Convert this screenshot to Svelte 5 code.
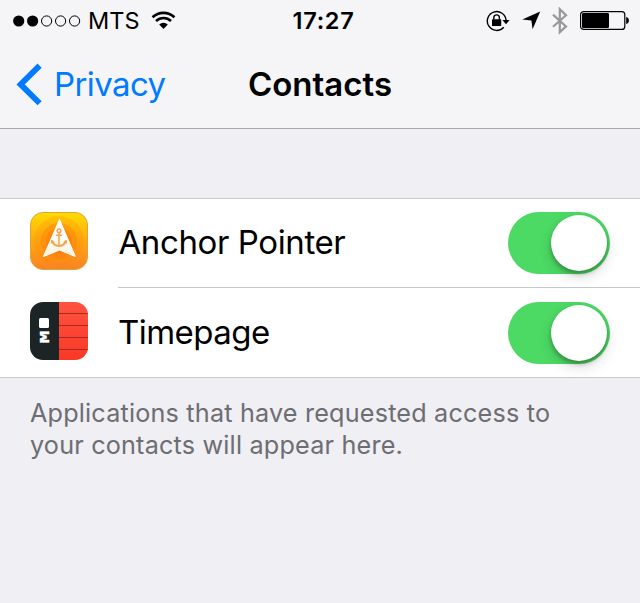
<script>
  let apps = $state([
    { id: 'anchor', name: 'Anchor Pointer', on: true },
    { id: 'timepage', name: 'Timepage', on: true }
  ]);
</script>

<div class="screen">
  <header>
    <div class="status">
      <div class="left">
        <svg class="signal" width="68" height="12" viewBox="0 0 68 12">
          <circle cx="5.7" cy="6" r="5.6" />
          <circle cx="19.6" cy="6" r="5.6" />
          {#each [33.6, 47.6, 61.6] as x}
            <circle cx={x} cy="6" r="5.1" fill="none" stroke="#000" stroke-width="1" />
          {/each}
        </svg>
        <span class="carrier">MTS</span>
        <svg class="wifi" width="25" height="19.500" viewBox="0 0 26 20">
          <path d="M1.6 6.4a16.5 16.5 0 0 1 22.8 0M5.2 10.3a11.3 11.3 0 0 1 15.6 0" fill="none" stroke="#000" stroke-width="2.7" />
          <path d="M8.5 13.9a6.6 6.6 0 0 1 9 0L13 18.6z" />
        </svg>
      </div>
      <span class="time">17:27</span>
      <div class="right">
        <svg class="lock" width="24" height="22" viewBox="0 0 24 22">
          <path d="M17.8 17.2A9.4 9.4 0 1 1 20.1 10.5" fill="none" stroke="#000" stroke-width="1.4" />
          <path d="M16.4 10h7.2L20 14.2z" />
          <rect x="6" y="9.2" width="9.2" height="6.8" rx=".6" />
          <path d="M7.8 9.5V7.7a2.8 2.8 0 0 1 5.6 0v1.8" fill="none" stroke="#000" stroke-width="1.4" />
        </svg>
        <svg class="arrow" width="19" height="19" viewBox="0 0 19 19"><path d="M18.2.5 10.6 18.3 9.400 9.600.3 8.600z" /></svg>
        <svg class="bt" width="16" height="28" viewBox="0 0 16 28">
          <path d="M1 7.6 14 19.4 7.8 25.2V2.2L14 8.2 1 19.8" fill="none" stroke="#98989a" stroke-width="2.200" />
        </svg>
        <svg class="battery" width="49" height="19" viewBox="0 0 49 19">
          <rect x=".6" y=".6" width="44.2" height="17.8" rx="3" fill="none" stroke="#000" stroke-width="1.2" />
          <rect x="2" y="2" width="27" height="15" rx="1.2" />
          <path d="M46.2 6c3.6.6 3.6 6.400 0 7z" />
        </svg>
      </div>
    </div>
    <nav>
      <button class="back">
        <svg width="26" height="43" viewBox="0 0 26 43"><path d="M23.600 2.600 4.600 21.400 23.600 40.200" fill="none" stroke="#007aff" stroke-width="5.800" /></svg>
        <span>Privacy</span>
      </button>
      <h1>Contacts</h1>
    </nav>
  </header>

  <section class="list">
    {#each apps as app (app.id)}
      <div class="row">
        {#if app.id === 'anchor'}
          <svg class="icon" width="58" height="58" viewBox="0 0 58 58">
            <defs>
              <linearGradient id="sun" x1="0" y1="0" x2="0" y2="1">
                <stop offset="0" stop-color="#ffdc00" /><stop offset=".5" stop-color="#ffa811" /><stop offset="1" stop-color="#fa8224" />
              </linearGradient>
              <linearGradient id="paper" x1="0" y1="0" x2="0" y2="1">
                <stop offset=".4" stop-color="#fff" /><stop offset="1" stop-color="#fff2df" />
              </linearGradient>
            </defs>
            <rect x=".5" y=".5" width="57" height="57" rx="12.500" fill="url(#sun)" stroke="#dda43c" />
            <circle cx="29" cy="29" r="25" fill="#ff8208" opacity=".22" />
            <circle cx="29" cy="29" r="18" fill="#ff7808" opacity=".38" />
            <circle cx="29" cy="29" r="13" fill="#f56e0c" opacity=".35" />
            <path d="M29.500 7.500 45.300 44.500 29.500 38 13.500 44.500z" fill="url(#paper)" stroke="#fff" stroke-linejoin="round" />
            <g fill="none" stroke="#f5a44a" stroke-width="1.500">
              <circle cx="29" cy="18.700" r="1.800" />
              <path d="M29 20.500V34M25.700 23.200h6.600" />
              <path d="M22 28.500c1 3.800 3.400 5.400 7 5.400s6-1.600 7-5.400" stroke-width="2" />
            </g>
            <path d="m21 27.800 4 2.500-3.700 1.500zM37 27.800l-4 2.500 3.700 1.500z" fill="#f5a44a" />
          </svg>
        {:else}
          <svg class="icon" width="58" height="58" viewBox="0 0 58 58">
            <defs>
              <clipPath id="tile"><rect width="58" height="58" rx="13" /></clipPath>
              <linearGradient id="red" x1="0" y1="0" x2="0" y2="1">
                <stop offset="0" stop-color="#ff533e" /><stop offset="1" stop-color="#f93827" />
              </linearGradient>
            </defs>
            <g clip-path="url(#tile)">
              <rect width="29" height="58" fill="#1d2426" />
              <rect x="29" width="29" height="58" fill="url(#red)" />
              <path d="M29 11.500h29M29 23.500h29M29 35.500h29M29 47.500h29" stroke="#a52a20" />
            </g>
            <rect x="9" y="16" width="10" height="10" rx="1.500" fill="#fff" />
            <text class="mark" transform="translate(19 41.300) rotate(-90)" textLength="12.500" lengthAdjust="spacingAndGlyphs">M</text>
          </svg>
        {/if}
        <div class="cell">
          <span class="name {app.id}">{app.name}</span>
          <button class="toggle" class:on={app.on} role="switch" aria-checked={app.on} aria-label={app.name} onclick={() => (app.on = !app.on)}>
            <span class="knob"></span>
          </button>
        </div>
      </div>
    {/each}
  </section>
  <p class="note">Applications that have requested access to<br />your contacts will appear here.</p>
</div>

<style>
  :global(body) { margin: 0; background: #efeff4; }
  .screen { box-sizing: border-box; width: 640px; height: 603px; overflow: hidden; background: #efeff4; color: #000; font-family: Inter, 'Liberation Sans', sans-serif; }
  svg { display: block; flex: none; }
  button { border: 0; padding: 0; background: none; font: inherit; }
  header { box-sizing: border-box; height: 129px; background: #f5f5f7; border-bottom: 1px solid #a9a9ac; }
  .status { display: grid; grid-template-columns: 1fr auto 1fr; height: 41px; align-items: center; }
  .left, .right { display: flex; align-items: center; height: 41px; }
  .left { padding-left: 13px; }
  .carrier { margin-left: 7px; font-size: 23.5px; line-height: 41px; }
  .wifi { margin-left: 12px; }
  .time { font-size: 23.5px; font-weight: 600; line-height: 41px; letter-spacing: .7px; padding-left: 7px; }
  .right { justify-content: flex-end; padding-right: 11px; }
  .arrow { margin-left: 12px; }
  .bt { margin-left: 11px; }
  .battery { margin-left: 12px; }
  nav { display: grid; grid-template-columns: 1fr auto 1fr; height: 87px; align-items: center; }
  .back { display: flex; align-items: center; padding-left: 16px; color: #007aff; font-size: 33px; line-height: 44px; }
  .back span { margin-left: 12px; padding-bottom: 2px; letter-spacing: -.6px; }
  h1 { margin: 0; padding-bottom: 2px; font-size: 33px; font-weight: 600; line-height: 44px; letter-spacing: 0; }
  .list { margin-top: 69px; border-top: 1px solid #c8c7cc; border-bottom: 1px solid #c8c7cc; background: #fff; }
  .row { display: flex; padding-left: 30px; }
  .icon { margin-top: 13px; }
  .row:last-child .icon { margin-top: 14px; }
  .cell { box-sizing: border-box; flex: 1; display: flex; justify-content: space-between; align-items: center; height: 89px; margin-left: 30px; padding-right: 30px; border-bottom: 1px solid #c8c7cc; }
  .row:last-child .cell { border-bottom: 0; }
  .name { padding: 0 0 2px .5px; font-size: 33px; line-height: 44px; letter-spacing: -.4px; }
  .name.timepage { padding-left: 0; letter-spacing: -.55px; }
  .toggle { width: 102px; height: 62px; box-sizing: border-box; padding: 3px; border-radius: 31px; background: #e5e5ea; display: flex; }
  .toggle.on { background: #4cd964; justify-content: flex-end; }
  .knob { width: 56px; height: 56px; border-radius: 50%; background: #fff; box-shadow: 0 3px 4px rgba(0,0,0,.28), 0 6px 14px rgba(0,0,0,.14); }
  .mark { font: bold 13.7px 'Liberation Mono', monospace; fill: #fff; stroke: #fff; stroke-width: .3px; }
  .note { margin: 19px 30px 0; font-size: 25.2px; line-height: 32px; letter-spacing: .19px; color: #6d6d72; white-space: nowrap; }
</style>
